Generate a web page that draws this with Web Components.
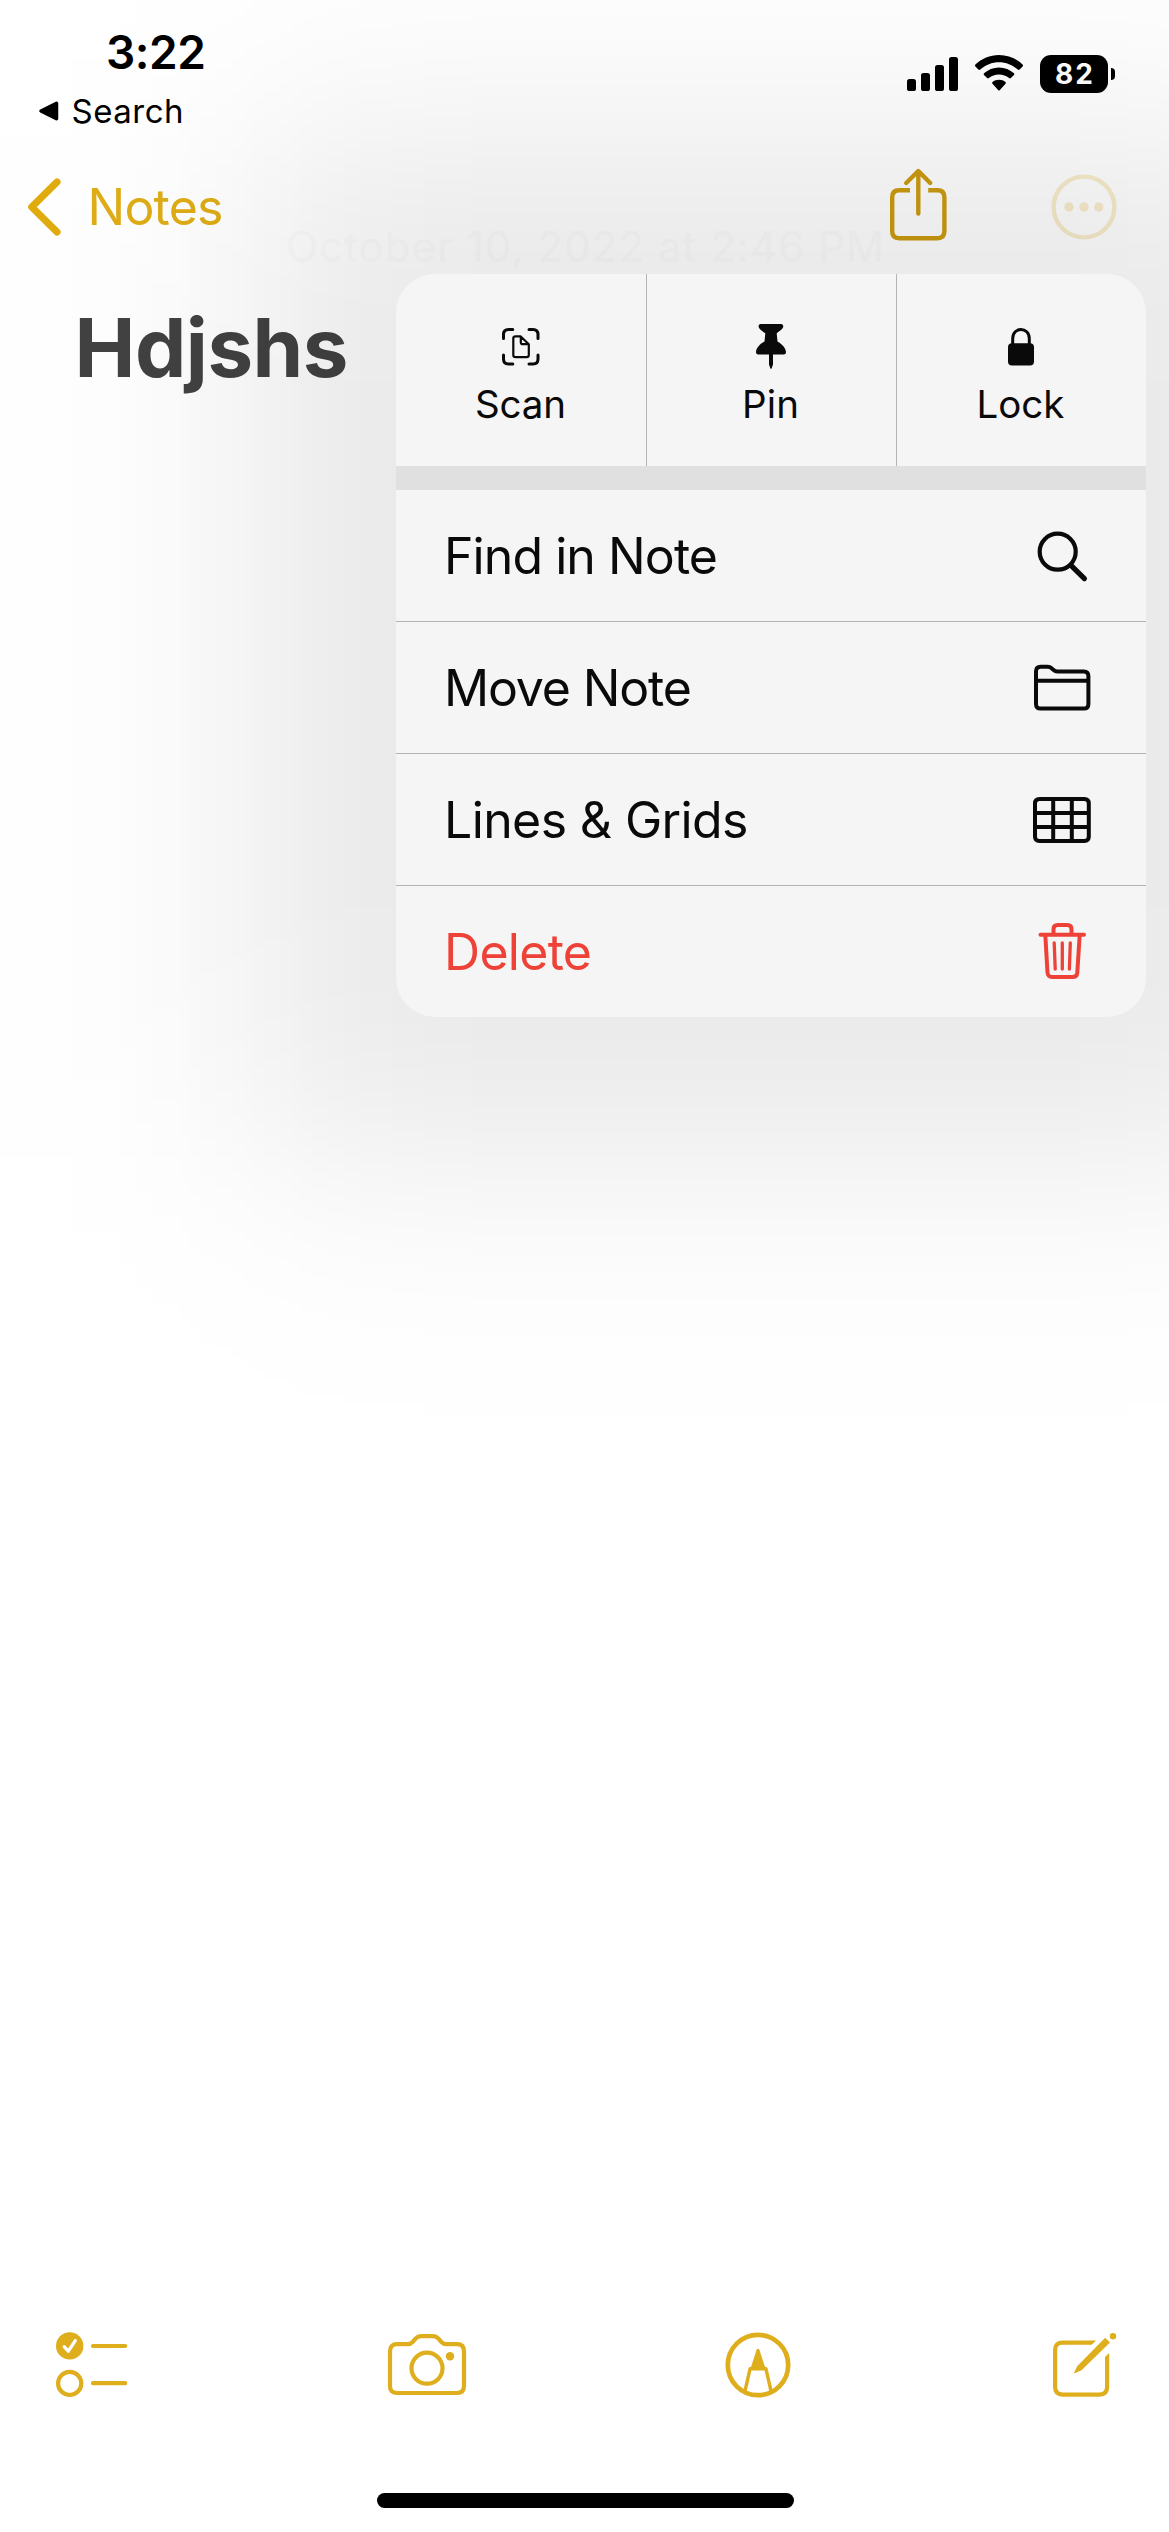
<!DOCTYPE html>
<html lang="en">
<head>
<meta charset="utf-8">
<title>Notes</title>
<style>
    html, body { margin: 0; padding: 0; background: #fff; }
    body {
        width: 1169px;
        height: 2532px;
        overflow: hidden;
        font-family: Inter, "Liberation Sans", sans-serif;
        color: #000;
    }
</style>
</head>
<body>

<notes-app>
    <status-bar slot="status" time="3:22" back="Search" battery="82"></status-bar>
    <nav-bar slot="nav"><fit-text width="136">Notes</fit-text></nav-bar>
    <note-page slot="note">
        <fit-text slot="date" width="598">October 10, 2022 at 2:46 PM</fit-text>
        <fit-text slot="title" width="274">Hdjshs</fit-text>
    </note-page>
    <tool-bar slot="tools"></tool-bar>
    <context-menu slot="menu">
        <menu-tile slot="tiles" icon="scan"><fit-text width="91">Scan</fit-text></menu-tile>
        <menu-tile slot="tiles" icon="pin"><fit-text width="57">Pin</fit-text></menu-tile>
        <menu-tile slot="tiles" icon="lock"><fit-text width="88">Lock</fit-text></menu-tile>
        <menu-row icon="search"><fit-text width="274">Find in Note</fit-text></menu-row>
        <menu-row icon="folder"><fit-text width="248">Move Note</fit-text></menu-row>
        <menu-row icon="grid"><fit-text width="304.500">Lines &amp; Grids</fit-text></menu-row>
        <menu-row icon="trash" class="danger"><fit-text width="148">Delete</fit-text></menu-row>
    </context-menu>
</notes-app>

<script>
// every icon: [width, height, markup]
const ICONS = {
    signal: [51, 34, `<g fill="currentColor"><rect x="0" y="22" width="9" height="12" rx="2.6"/><rect x="14" y="16" width="9" height="18" rx="2.6"/><rect x="28" y="8" width="9" height="26" rx="2.6"/><rect x="42" y="0" width="9" height="34" rx="2.6"/></g>`],
    wifi: [48, 36, `<g fill="currentColor"><path d="M24 0C33 0 41.500 3.500 47.600 9.600Q48.400 10.500 47.600 11.400L44.600 14.600Q43.700 15.400 42.800 14.600C37.600 9.800 31 7.200 24 7.200S10.400 9.800 5.200 14.600Q4.300 15.400 3.400 14.600L.4 11.400Q-.4 10.500 .4 9.600C6.500 3.500 15 0 24 0Z"/><path d="M24 12.400C29.800 12.400 35 14.600 39 18.200Q39.800 19.100 39 20L35.900 23.100Q35 23.900 34.100 23.100C31.300 20.700 27.800 19.500 24 19.500S16.700 20.700 13.900 23.100Q13 23.900 12.100 23.100L9 20Q8.200 19.100 9 18.200C13 14.600 18.200 12.400 24 12.400Z"/><path d="M24 24.700C26.500 24.700 28.700 25.500 30.500 26.900Q31.400 27.800 30.500 28.700L24.900 35Q24 36 23.100 35L17.500 28.700Q16.600 27.800 17.500 26.900C19.300 25.500 21.500 24.700 24 24.700Z"/></g>`],
    backApp: [20, 20, `<path d="M17.500 2.300V17.700L2 10Z" fill="currentColor" stroke="currentColor" stroke-width="3.500" stroke-linejoin="round"/>`],
    chevron: [34, 58, `<path d="M30 4 4.800 29 30 54" fill="none" stroke="currentColor" stroke-width="7.200" stroke-linecap="round" stroke-linejoin="round"/>`],
    share: [58, 73, `<g fill="none" stroke="currentColor" stroke-width="4.400" stroke-linejoin="round"><path d="M20 22.300H9.200Q2.200 22.300 2.200 29.300V63.200Q2.200 70.200 9.200 70.200H47.400Q54.400 70.200 54.400 63.200V29.300Q54.400 22.300 47.400 22.300H38.200"/><path d="M28.300 4V45.500M16.200 15 28.300 3 40.200 15" stroke-linecap="round"/></g>`],
    more: [66, 66, `<circle cx="33" cy="33" r="30.400" fill="none" stroke="currentColor" stroke-width="4.400"/><g fill="currentColor"><circle cx="18" cy="33" r="4.700"/><circle cx="33" cy="33" r="4.700"/><circle cx="47.800" cy="33" r="4.700"/></g>`],
    scan: [38, 38, `<g fill="none" stroke="currentColor" stroke-linecap="round" stroke-linejoin="round"><path stroke-width="3" d="M1.500 10.500V6.500Q1.500 1.500 6.500 1.500H10.800M27 1.500H31Q36 1.500 36 6.500V10.500M36 27V31Q36 36 31 36H27M10.800 36H6.500Q1.500 36 1.500 31V27"/><path stroke-width="2.200" d="M18.500 8.300H13.500Q11.300 8.300 11.300 10.500V27Q11.300 29.200 13.500 29.200H24.600Q26.800 29.200 26.800 27V16.300ZM18.800 8.500V14.200Q18.800 16.200 20.800 16.200H26.500"/></g>`],
    pin: [30, 45, `<path fill="currentColor" d="M4.500 0H25.300Q27.400 .4 27.300 2.300C27.200 5 23.500 7.200 20.700 9.200L21.500 17.500C26 20 30 24 30 28.300Q30 30.500 27.800 30.500H17V40.500L15.600 44.500Q15 45.200 14.400 44.500L13 40.500V30.500H2.200Q0 30.500 0 28.300C0 24 4 20 8.500 17.500L9.300 9.200C6.500 7.200 2.600 5 2.500 2.300Q2.400 .4 4.500 0Z"/>`],
    lock: [26, 38, `<rect x="0" y="15.200" width="26" height="22.300" rx="4" fill="currentColor"/><path d="M4.700 17V10.500C4.700-1.500 21.300-1.500 21.300 10.500V17" fill="none" stroke="currentColor" stroke-width="3"/>`],
    search: [58, 60, `<g fill="none" stroke="currentColor" stroke-linecap="round"><circle cx="24.700" cy="25.700" r="18" stroke-width="4.200"/><path stroke-width="5.200" d="M38 39.300 51.400 52.600"/></g>`],
    folder: [58, 60, `<path fill="none" stroke="currentColor" stroke-width="4" stroke-linejoin="round" d="M3 13.300Q3 8.700 7.600 8.700H14.500Q17 8.700 18.800 10.400L20.300 11.700Q22.200 13.400 24.500 13.400H50.800Q55.400 13.400 55.400 18V45.900Q55.400 50.500 50.800 50.500H7.600Q3 50.500 3 45.900ZM3 22.800H55.400"/>`],
    grid: [60, 60, `<path fill="none" stroke="currentColor" stroke-width="4" d="M7.500 9H52.300Q56.800 9 56.800 13.500V46.500Q56.800 51 52.300 51H7.500Q3 51 3 46.500V13.500Q3 9 7.500 9ZM21.200 9V51M39.800 9V51M3 23H56.800M3 37H56.800"/>`],
    trash: [58, 60, `<g fill="none" stroke="currentColor" stroke-linecap="round" stroke-linejoin="round"><path stroke-width="4" d="M7.500 12.700H51M20.500 12.500V7.200Q20.500 3 24.700 3H34.300Q38.500 3 38.500 7.200V12.500M12.300 13 14.500 50.500Q14.800 55 19.300 55H39.500Q44 55 44.300 50.500L46.700 13"/><path stroke-width="3.300" d="M21.200 20.800 22.200 47M29.300 20.800V47M37.300 20.800 36.400 47"/></g>`],
    checklist: [72, 66, `<circle cx="13.700" cy="13.900" r="13.700" fill="currentColor"/><path d="M8.300 14.800 12.300 19.200 19.300 8.600" fill="none" stroke="#fff" stroke-width="3.300" stroke-linecap="round" stroke-linejoin="round"/><g fill="none" stroke="currentColor" stroke-width="4.200" stroke-linecap="round"><circle cx="13.700" cy="51.400" r="11.600"/><path d="M37 14H69.200M37 51.200H69.200"/></g>`],
    camera: [78, 62, `<g fill="none" stroke="currentColor" stroke-width="4.200"><path stroke-linejoin="round" d="M9 10.200H19.500Q22.500 10.200 24.600 8L27.800 4.400Q29.900 2.200 32.800 2.200H45.200Q48.100 2.200 50.200 4.400L53.400 8Q55.500 10.200 58.500 10.200H69Q76 10.200 76 17.200V52Q76 59 69 59H9Q2 59 2 52V17.200Q2 10.200 9 10.200Z"/><circle cx="39" cy="34.200" r="15.500"/></g><circle cx="62" cy="22.200" r="4.200" fill="currentColor"/>`],
    marker: [66, 66, `<g fill="none" stroke="currentColor"><circle cx="33" cy="33" r="30.200" stroke-width="4.700"/><path stroke-width="3.400" stroke-linejoin="round" d="M20.100 58.500 25.100 36.700H40.900L45.900 58.500"/></g><path fill="currentColor" d="M31.700 17.500Q33 15.800 34.300 17.500L40.800 37.500H25.200Z"/>`],
    compose: [64, 64, `<path fill="none" stroke="currentColor" stroke-width="4.200" d="M43 9.600H9.600Q2.100 9.600 2.100 17.100V54.100Q2.100 61.600 9.600 61.600H46.600Q54.100 61.600 54.100 54.100V20.500"/><path fill="#fff" d="M38.500 12 44.500 6 60 16 52 24Z"/><path fill="currentColor" d="M52.200 4.800 57 9.400 28.500 37.300 21.800 40.200Q20.800 40.400 21.200 39.300L24.400 33Z"/><circle cx="60" cy="3.200" r="3.200" fill="currentColor"/>`]
};

function icon(name) {
    const [w, h, body] = ICONS[name];
    return `<svg width="${w}" height="${h}" viewBox="0 0 ${w} ${h}" style="display:block;flex:none;overflow:visible" aria-hidden="true">${body}</svg>`;
}

// smooth falloff on both sides of a span, as gradient stops
function falloff(start, end, length, strength) {
    const side = (d) => 1 / (1 + Math.exp(1.702 * (d - 140) / 115));
    const stops = [];
    for (let p = 0; p <= length; p += 16) {
        const a = strength * side(start - p) * side(p - end);
        stops.push(`rgba(0,0,0,${a.toFixed(5)}) ${p}px`);
    }
    return stops.join(",");
}

// one line of text, tracked so that it fills the given width
class FitText extends HTMLElement {
    constructor() {
        super();
        this.attachShadow({ mode: "open" }).innerHTML = `
            <style>
                :host { display: block; flex: none; white-space: nowrap; }
                span { display: inline-block; }
            </style>
            <span><slot></slot></span>`;
    }

    connectedCallback() {
        const span = this.shadowRoot.querySelector("span");
        const width = Number(this.getAttribute("width"));
        const count = this.textContent.trim().length;
        this.style.width = width + "px";
        const gap = (width - span.getBoundingClientRect().width) / (count - 1);
        span.style.letterSpacing = gap.toFixed(3) + "px";
    }
}

class NotesApp extends HTMLElement {
    constructor() {
        super();
        this.attachShadow({ mode: "open" }).innerHTML = `
            <style>
                :host {
                    display: flex;
                    flex-direction: column;
                    position: relative;
                    width: 1169px;
                    height: 2532px;
                    overflow: hidden;
                    background: #fff;
                }
                main { flex: 1; }
                .shade {
                    position: absolute;
                    left: 0;
                    top: 0;
                    width: 1169px;
                    height: 1520px;
                    background: linear-gradient(to right, ${falloff(396, 1146, 1184, .092)});
                    -webkit-mask-image: linear-gradient(to bottom, ${falloff(274, 1017, 1520, 1)});
                    mask-image: linear-gradient(to bottom, ${falloff(274, 1017, 1520, 1)});
                    pointer-events: none;
                }
                .menu { position: absolute; left: 396px; top: 274px; }
                .home {
                    width: 417px;
                    height: 15px;
                    margin: 0 375px 24px 377px;
                    border-radius: 8px;
                    background: #000;
                }
            </style>
            <slot name="status"></slot>
            <slot name="nav"></slot>
            <main><slot name="note"></slot></main>
            <slot name="tools"></slot>
            <div class="home"></div>
            <div class="shade"></div>
            <div class="menu"><slot name="menu"></slot></div>`;
    }
}

class StatusBar extends HTMLElement {
    constructor() {
        super();
        this.attachShadow({ mode: "open" });
    }

    connectedCallback() {
        this.shadowRoot.innerHTML = `
            <style>
                :host {
                    display: flex;
                    justify-content: space-between;
                    height: 150px;
                    box-sizing: border-box;
                    padding: 30px 54px 0 39px;
                }
                .time { font-size: 46px; line-height: 44px; font-weight: 600; margin-left: 67px; }
                .back { display: flex; align-items: center; gap: 12.500px; margin-top: 20px; font-size: 33px; line-height: 34px; font-weight: 400; }
                .right { display: flex; align-items: flex-end; height: 63px; }
                .signal { padding-bottom: 2px; margin-right: 17px; }
                .wifi { padding-bottom: 2px; margin-right: 17px; }
                .battery {
                    display: flex;
                    align-items: center;
                    justify-content: center;
                    width: 68px;
                    height: 38px;
                    border-radius: 11px;
                    background: #000;
                    color: #fff;
                    font-size: 28px;
                    line-height: 38px;
                    font-weight: 700;
                }
                .nub { width: 4px; height: 12px; margin: 0 0 13px 3px; border-radius: 0 5px 5px 0; background: #000; }
            </style>
            <div>
                <fit-text class="time" width="100">${this.getAttribute("time")}</fit-text>
                <div class="back">${icon("backApp")}<fit-text width="112">${this.getAttribute("back")}</fit-text></div>
            </div>
            <div class="right">
                <div class="signal">${icon("signal")}</div>
                <div class="wifi">${icon("wifi")}</div>
                <div class="battery"><fit-text width="38">${this.getAttribute("battery")}</fit-text></div>
                <div class="nub"></div>
            </div>`;
    }
}

class NavBar extends HTMLElement {
    constructor() {
        super();
        this.attachShadow({ mode: "open" }).innerHTML = `
            <style>
                :host {
                    display: flex;
                    align-items: center;
                    height: 78px;
                    box-sizing: border-box;
                    padding: 36px 52px 0 27px;
                    color: #e0ac0e;
                    font-size: 50px;
                    line-height: 50px;
                }
                .label { margin-left: 26.500px; flex: 1; color: #dfad15; }
                .share { color: #cc9c10; margin-right: 103px; margin-top: -5px; }
                .more { color: #f8edcc; }
            </style>
            ${icon("chevron")}
            <div class="label"><slot></slot></div>
            <div class="share">${icon("share")}</div>
            <div class="more">${icon("more")}</div>`;
    }
}

class NotePage extends HTMLElement {
    constructor() {
        super();
        this.attachShadow({ mode: "open" }).innerHTML = `
            <style>
                :host { display: block; }
                .date { padding-left: 286px; font-size: 42px; line-height: 37px; color: #fbfbfb; }
                .title { padding: 37px 0 0 74.500px; font-size: 81.500px; line-height: 91px; font-weight: 700; color: #424242; }
            </style>
            <div class="date"><slot name="date"></slot></div>
            <div class="title"><slot name="title"></slot></div>`;
    }
}

class ToolBar extends HTMLElement {
    constructor() {
        super();
        this.attachShadow({ mode: "open" }).innerHTML = `
            <style>
                :host {
                    display: flex;
                    align-items: center;
                    justify-content: space-between;
                    height: 70px;
                    margin-bottom: 93px;
                    padding: 0 52px 0 56px;
                    color: #deae1c;
                }
                .marker { margin: 0 1.500px 0 -1.500px; }
            </style>
            ${icon("checklist")}${icon("camera")}<div class="marker">${icon("marker")}</div>${icon("compose")}`;
    }
}

class ContextMenu extends HTMLElement {
    constructor() {
        super();
        this.attachShadow({ mode: "open" }).innerHTML = `
            <style>
                :host { display: block; width: 750px; }
                .clip { border-radius: 39px; overflow: hidden; background: #f5f5f5; color: #0a0a0a; }
                .tiles { display: grid; grid-template-columns: repeat(3, 1fr); height: 192px; }
                .gap { height: 24px; background: #e0e0e0; }
            </style>
            <div class="clip">
                <div class="tiles"><slot name="tiles"></slot></div>
                <div class="gap"></div>
                <slot></slot>
            </div>`;
    }
}

class MenuTile extends HTMLElement {
    constructor() {
        super();
        this.attachShadow({ mode: "open" });
    }

    connectedCallback() {
        this.shadowRoot.innerHTML = `
            <style>
                :host {
                    display: flex;
                    flex-direction: column;
                    align-items: center;
                    box-sizing: border-box;
                    padding: 50px 2px 0 0;
                    border-left: 1px solid #b4b4b4;
                    font-size: 38.500px;
                    line-height: 40px;
                }
                :host(:first-of-type) { border-left: 0; padding-right: 1px; }
                .icon { display: flex; align-items: center; height: 45px; margin-bottom: 15px; }
            </style>
            <div class="icon">${icon(this.getAttribute("icon"))}</div>
            <slot></slot>`;
    }
}

class MenuRow extends HTMLElement {
    constructor() {
        super();
        this.attachShadow({ mode: "open" });
    }

    connectedCallback() {
        this.shadowRoot.innerHTML = `
            <style>
                :host {
                    display: flex;
                    align-items: center;
                    justify-content: space-between;
                    height: 132px;
                    box-sizing: border-box;
                    padding: 0 54px 0 48px;
                    border-bottom: 1px solid #b4b4b4;
                    font-size: 50px;
                    line-height: 50px;
                }
                :host(:last-of-type) { border-bottom: 0; height: 131px; }
                :host(.danger) { color: #ee4238; }
                .icon { display: flex; justify-content: center; width: 60px; }
            </style>
            <slot></slot>
            <div class="icon">${icon(this.getAttribute("icon"))}</div>`;
    }
}

customElements.define("notes-app", NotesApp);
customElements.define("status-bar", StatusBar);
customElements.define("nav-bar", NavBar);
customElements.define("note-page", NotePage);
customElements.define("tool-bar", ToolBar);
customElements.define("context-menu", ContextMenu);
customElements.define("menu-tile", MenuTile);
customElements.define("menu-row", MenuRow);
// last, because it measures text with its parents' styles applied
customElements.define("fit-text", FitText);
</script>
</body>
</html>
